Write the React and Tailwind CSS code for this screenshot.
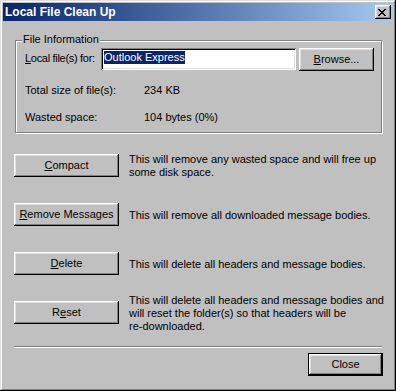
import React from "react";

const bevel =
    "shadow-[inset_-1px_-1px_#000,inset_1px_1px_#fff,inset_-2px_-2px_#808080,inset_2px_2px_#dfdfdf]";

function Btn({ children, isDefault = false, className = "" }) {
    return (
        <button
            className={`bg-[#c0c0c0] h-[23px] flex items-center justify-center text-[11px] leading-[13px] text-black ${
                isDefault ? "border border-black" : ""
            } ${bevel} ${className}`}
        >
            {children}
        </button>
    );
}

function CloseGlyph() {
    // 8x7 pixel "x" like the classic caption button
    const rows = [
        [[0, 2], [6, 2]],
        [[1, 2], [5, 2]],
        [[2, 4]],
        [[3, 2]],
        [[2, 4]],
        [[1, 2], [5, 2]],
        [[0, 2], [6, 2]],
    ];
    return (
        <svg width="8" height="7" viewBox="0 0 8 7" shapeRendering="crispEdges">
            {rows.map((r, y) =>
                r.map(([x, w], i) => <rect key={`${y}-${i}`} x={x} y={y} width={w} height="1" fill="#000" />)
            )}
        </svg>
    );
}

function Action({ label, children }) {
    return (
        <div className="h-[23px] flex items-center">
            <Btn className="w-[105px] shrink-0">{label}</Btn>
            <p className="ml-[10px] whitespace-nowrap leading-[13px] pt-[1px]">{children}</p>
        </div>
    );
}

export default function App() {
    return (
        <div className="w-[396px] h-[391px] bg-[#c0c0c0] p-[3px] flex flex-col text-[11px] leading-[13px] text-black font-['Liberation_Sans',Arial,sans-serif] shadow-[inset_-1px_-1px_#000,inset_1px_1px_#dfdfdf,inset_-2px_-2px_#808080,inset_2px_2px_#fff]">
            {/* Title bar */}
            <div className="h-[18px] flex items-center justify-between pl-[2px] pr-[2px] bg-linear-to-r from-[#0a246a] to-[#a6caf0]">
                <span className="font-bold text-white text-[12px] leading-[14px]">Local File Clean Up</span>
                <button className={`w-[16px] h-[14px] bg-[#c0c0c0] flex items-start pl-[3px] pt-[4px] ${bevel}`}>
                    <CloseGlyph />
                </button>
            </div>

            {/* Body */}
            <div className="flex-1 pl-[11px] pr-[10px] flex flex-col">
                {/* File Information group */}
                <div className="relative ml-[1px] mt-[19px] w-[367px] h-[93px] border border-[#808080] shadow-[inset_1px_1px_#fff,1px_1px_#fff] pl-[9px] pt-[7px]">
                    <span className="absolute -top-[8px] left-[6px] px-[1px] bg-[#c0c0c0]">File Information</span>

                    <div className="flex items-start h-[23px]">
                        <span className="w-[76px] pt-[4px] tracking-[-0.3px] whitespace-nowrap">
                            <u className="underline-offset-[1px]">L</u>ocal file(s) for:
                        </span>
                        <div className="w-[195px] h-[22px] bg-white pl-[3px] pt-[3px] shadow-[inset_1px_1px_#808080,inset_-1px_-1px_#fff,inset_2px_2px_#000,inset_-2px_-2px_#dfdfdf]">
                            <span className="bg-[#0a246a] text-white inline-block">Outlook Express</span>
                        </div>
                        <Btn className="w-[75px] ml-[3px]">
                            <span>
                                <u className="underline-offset-[1px]">B</u>rowse...
                            </span>
                        </Btn>
                    </div>

                    <div className="flex mt-[13px]">
                        <span className="w-[119px]">Total size of file(s):</span>
                        <span>234 KB</span>
                    </div>
                    <div className="flex mt-[14px]">
                        <span className="w-[119px]">Wasted space:</span>
                        <span>104 bytes (0%)</span>
                    </div>
                </div>

                {/* Actions */}
                <div className="mt-[21px] flex flex-col gap-[26px]">
                    <Action label={<span><u className="underline-offset-[1px]">C</u>ompact</span>}>
                        This will remove any wasted space and will free up
                        <br />
                        some disk space.
                    </Action>
                    <Action label={<span><u className="underline-offset-[1px]">R</u>emove Messages</span>}>
                        This will remove all downloaded message bodies.
                    </Action>
                    <Action label={<span><u className="underline-offset-[1px]">D</u>elete</span>}>
                        This will delete all headers and message bodies.
                    </Action>
                    <Action label={<span>R<u className="underline-offset-[1px]">e</u>set</span>}>
                        This will delete all headers and message bodies and
                        <br />
                        will reset the folder(s) so that headers will be
                        <br />
                        re-downloaded.
                    </Action>
                </div>

                {/* Separator */}
                <div className="mt-[22px] w-[368px] h-[2px] border-t border-[#808080] border-b border-b-white" />

                <div className="mt-[5px] flex justify-end">
                    <Btn isDefault className="w-[75px]">Close</Btn>
                </div>
            </div>
        </div>
    );
}
